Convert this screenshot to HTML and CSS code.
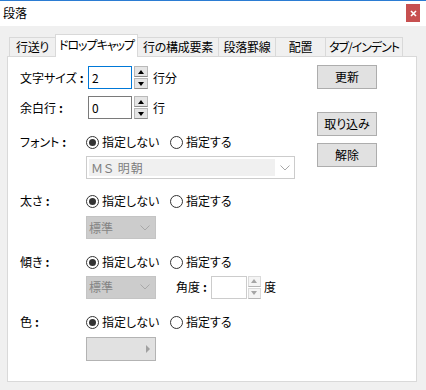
FILE: index.html
```html
<!DOCTYPE html>
<html lang="ja">
<head>
<meta charset="utf-8">
<title>段落</title>
<link rel="stylesheet" href="styles.css">
</head>
<body>
<div class="window">
  <div class="titlebar">
    <span class="title">段落</span>
    <span class="close"><svg width="7" height="7" viewBox="0 0 7 7"><path d="M1 1L6 6M6 1L1 6" stroke="#fff" stroke-width="1.6" fill="none"/></svg></span>
  </div>
  <div class="tabs">
    <div class="tab w1">行送り</div>
    <div class="tab active w2 kana">ドロップキャップ</div>
    <div class="tab w3 noleft">行の構成要素</div>
    <div class="tab w4">段落罫線</div>
    <div class="tab w5">配置</div>
    <div class="tab w6 last kana">タブ/インデント</div>
  </div>
  <div class="panel">
    <div class="form">
      <div class="row r-spin">
        <span class="label lw-spin">文字サイズ<span class="colon">:</span></span>
        <div class="spin focus">2</div>
        <div class="spinner"><span class="sb"><i class="up"></i></span><span class="sb"><i class="down"></i></span></div>
        <span class="unit">行分</span>
      </div>
      <div class="row r-spin mt5">
        <span class="label lw-spin">余白行<span class="colon">:</span></span>
        <div class="spin">0</div>
        <div class="spinner"><span class="sb"><i class="up"></i></span><span class="sb"><i class="down"></i></span></div>
        <span class="unit">行</span>
      </div>

      <div class="row r-radio mt14">
        <span class="label lw">フォント<span class="colon">:</span></span>
        <span class="opt o1"><span class="radio on"></span>指定しない</span>
        <span class="opt"><span class="radio"></span>指定する</span>
      </div>
      <div class="row mt6">
        <div class="combo">
          <span class="cval">ＭＳ 明朝</span>
          <span class="chev"><svg width="10" height="6" viewBox="0 0 10 6"><path d="M0.5 0.5L5 5L9.5 0.5" stroke="#a8a8a8" fill="none"/></svg></span>
        </div>
      </div>

      <div class="row r-radio mt14">
        <span class="label lw">太さ<span class="colon">:</span></span>
        <span class="opt o1"><span class="radio on"></span>指定しない</span>
        <span class="opt"><span class="radio"></span>指定する</span>
      </div>
      <div class="row mt7">
        <div class="scombo">
          <span class="sval">標準</span>
          <span class="chev"><svg width="10" height="6" viewBox="0 0 10 6"><path d="M0.5 0.5L5 5L9.5 0.5" stroke="#a8a8a8" fill="none"/></svg></span>
        </div>
      </div>

      <div class="row r-radio mt15">
        <span class="label lw">傾き<span class="colon">:</span></span>
        <span class="opt o1"><span class="radio on"></span>指定しない</span>
        <span class="opt"><span class="radio"></span>指定する</span>
      </div>
      <div class="row r-angle mt5">
        <div class="scombo">
          <span class="sval">標準</span>
          <span class="chev"><svg width="10" height="6" viewBox="0 0 10 6"><path d="M0.5 0.5L5 5L9.5 0.5" stroke="#a8a8a8" fill="none"/></svg></span>
        </div>
        <span class="angle-label">角度<span class="colon">:</span></span>
        <div class="spin dis"></div>
        <div class="spinner sdis"><span class="sb"><i class="up"></i></span><span class="sb"><i class="down"></i></span></div>
        <span class="unit2">度</span>
      </div>

      <div class="row r-radio mt15">
        <span class="label lw">色<span class="colon">:</span></span>
        <span class="opt o1"><span class="radio on"></span>指定しない</span>
        <span class="opt"><span class="radio"></span>指定する</span>
      </div>
      <div class="row mt7">
        <div class="colorbtn"><i class="tri"></i></div>
      </div>
    </div>
    <div class="buttons">
      <div class="btn">更新</div>
      <div class="btn b2">取り込み</div>
      <div class="btn b3">解除</div>
    </div>
  </div>
</div>
</body>
</html>
```

FILE: styles.css
```css
html, body {
  margin: 0;
  padding: 0;
}
body {
  background: #f0f0f0;
  font-family: "Noto Sans CJK JP", "Noto Sans", sans-serif;
  font-size: 12px;
  line-height: 16px;
  color: #000;
  font-feature-settings: "palt";
}
.window {
  width: 426px;
  height: 390px;
  overflow: hidden;
}
.titlebar {
  height: 25px;
  border-top: 1px solid #2b7cd3;
  background: #fff;
  display: flex;
  justify-content: space-between;
  align-items: flex-start;
}
.title {
  padding-left: 3px;
  line-height: 24px;
}
.close {
  width: 14px;
  height: 18px;
  margin-top: 3px;
  margin-right: 6px;
  background: #c75050;
  display: flex;
  align-items: center;
  justify-content: center;
}
.tabs {
  display: flex;
  margin-left: 9px;
  margin-top: 8px;
  height: 22px;
  align-items: flex-start;
}
.tab {
  box-sizing: border-box;
  height: 19px;
  margin-top: 3px;
  border: 1px solid #d9d9d9;
  border-bottom: none;
  border-right: none;
  background: #f0f0f0;
  text-align: center;
  line-height: 18px;
  white-space: nowrap;
  letter-spacing: -0.3px;
}
.tab.kana { letter-spacing: -1px; }
.tab.noleft { border-left: none; }
.tab.last { border-right: 1px solid #d9d9d9; }
.tab.active {
  height: 23px;
  margin-top: 0;
  background: #fff;
  border-right: 1px solid #d9d9d9;
  line-height: 20px;
  position: relative;
  z-index: 1;
}
.w1 { width: 46px; }
.w2 { width: 83px; }
.w3 { width: 80px; }
.w4 { width: 57px; }
.w5 { width: 50px; }
.w6 { width: 78px; }

.panel {
  margin-left: 7px;
  width: 410px;
  height: 326px;
  box-sizing: border-box;
  border: 1px solid #d9d9d9;
  background: #fff;
  display: flex;
  padding: 8px 0 0 12px;
}
.form {
  width: 297px;
}
.buttons {
  display: flex;
  flex-direction: column;
}
.btn {
  box-sizing: border-box;
  width: 60px;
  height: 24px;
  border: 1px solid #adadad;
  background: #e1e1e1;
  display: flex;
  align-items: center;
  justify-content: center;
}
.b2 { margin-top: 23px; }
.b3 { margin-top: 7px; }

.row {
  display: flex;
  align-items: center;
}
.r-spin { height: 25px; }
.r-radio { height: 16px; }
.r-angle { height: 24px; }
.mt5 { margin-top: 5px; }
.mt6 { margin-top: 6px; }
.mt7 { margin-top: 7px; }
.mt14 { margin-top: 14px; }
.mt15 { margin-top: 15px; }

.label { white-space: nowrap; }
.colon {
  margin-left: 3px;
  font-weight: bold;
}
.lw-spin { width: 68px; }
.lw { width: 66px; }

.spin {
  box-sizing: border-box;
  width: 44px;
  height: 23px;
  border: 1px solid #7a7a7a;
  background: #fff;
  padding-left: 3px;
  line-height: 21px;
}
.spin.focus { border-color: #0078d7; }
.spin.dis {
  width: 36px;
  border-color: #cccccc;
  margin-left: 4px;
}
.spinner {
  margin-left: 2px;
  width: 14px;
  height: 23px;
  display: flex;
  flex-direction: column;
  justify-content: space-between;
}
.sb {
  box-sizing: border-box;
  height: 11px;
  background: #e5e5e5;
  border: 1px solid #b9b9b9;
  border-bottom-color: #8c8c8c;
  display: flex;
  align-items: center;
  justify-content: center;
}
.up {
  width: 0;
  height: 0;
  border-left: 3px solid transparent;
  border-right: 3px solid transparent;
  border-bottom: 4px solid #000;
}
.down {
  width: 0;
  height: 0;
  border-left: 3px solid transparent;
  border-right: 3px solid transparent;
  border-top: 4px solid #000;
}
.spinner.sdis {
  margin-left: 1px;
  width: 13px;
}
.sdis .sb {
  background: #f4f4f4;
  border-color: #dadada;
  border-bottom-color: #b5b5b5;
}
.sdis .up { border-bottom-color: #a5a5a5; }
.sdis .down { border-top-color: #a5a5a5; }
.unit { margin-left: 5px; }
.unit2 { margin-left: 3px; }

.opt {
  display: flex;
  align-items: center;
  white-space: nowrap;
}
.o1 { width: 84px; }
.radio {
  box-sizing: border-box;
  width: 13px;
  height: 13px;
  border: 1px solid #333;
  border-radius: 50%;
  margin-right: 3px;
  display: flex;
  align-items: center;
  justify-content: center;
}
.radio.on::after {
  content: "";
  width: 7px;
  height: 7px;
  border-radius: 50%;
  background: #333;
}

.combo {
  box-sizing: border-box;
  margin-left: 66px;
  width: 209px;
  height: 23px;
  border: 1px solid #cccccc;
  display: flex;
  align-items: stretch;
}
.cval {
  flex: 1;
  margin: 2px 0 2px 2px;
  background: #f0f0f0;
  color: #7d7d7d;
  padding-left: 2px;
  line-height: 17px;
  letter-spacing: 1px;
}
.chev {
  width: 19px;
  display: flex;
  align-items: center;
  justify-content: center;
}
.scombo {
  box-sizing: border-box;
  margin-left: 66px;
  width: 70px;
  height: 23px;
  border: 1px solid #c4c4c4;
  background: #cccccc;
  display: flex;
  align-items: center;
}
.sval {
  flex: 1;
  padding-left: 2px;
  color: #858585;
}
.scombo .chev { width: 20px; }
.angle-label {
  margin-left: 20px;
  white-space: nowrap;
}
.colorbtn {
  box-sizing: border-box;
  margin-left: 66px;
  width: 70px;
  height: 24px;
  border: 1px solid #b3b3b3;
  background: #e1e1e1;
  display: flex;
  align-items: center;
  justify-content: flex-end;
  padding-right: 5px;
}
.tri {
  width: 0;
  height: 0;
  border-top: 4px solid transparent;
  border-bottom: 4px solid transparent;
  border-left: 4px solid #a0a0a0;
}
```
